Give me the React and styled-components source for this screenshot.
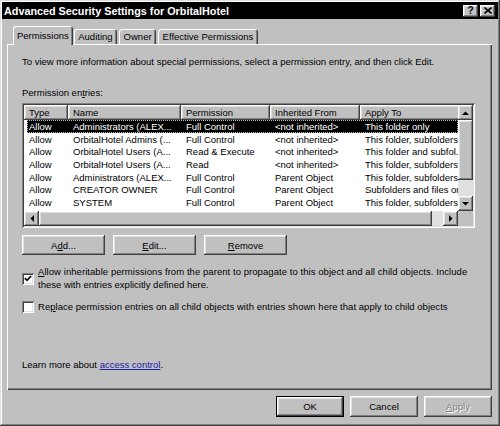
import React from 'react';
import styled, { createGlobalStyle } from 'styled-components';

const GlobalStyle = createGlobalStyle`
  html, body {
    margin: 0;
    padding: 0;
    background: #c0c0c0;
  }
  body {
    font-family: 'Liberation Sans', Arial, sans-serif;
    font-size: 9.5px;
    color: #000;
  }
  * {
    box-sizing: border-box;
  }
`;

const raised = `
  box-shadow: inset -1px -1px #404040, inset 1px 1px #fff,
    inset -2px -2px #808080, inset 2px 2px #dfdfdf;
`;

const sunken = `
  box-shadow: inset 1px 1px #808080, inset -1px -1px #fff,
    inset 2px 2px #404040, inset -2px -2px #dfdfdf;
`;

const COLUMNS = [
  { key: 'type', label: 'Type', w: 44 },
  { key: 'name', label: 'Name', w: 113 },
  { key: 'perm', label: 'Permission', w: 89 },
  { key: 'from', label: 'Inherited From', w: 90 },
  { key: 'apply', label: 'Apply To', w: 130 },
];

const ENTRIES = [
  ['Allow', 'Administrators (ALEX...', 'Full Control', '<not inherited>', 'This folder only'],
  ['Allow', 'OrbitalHotel Admins (...', 'Full Control', '<not inherited>', 'This folder, subfolders and files'],
  ['Allow', 'OrbitalHotel Users (A...', 'Read & Execute', '<not inherited>', 'This folder and subfol...'],
  ['Allow', 'OrbitalHotel Users (A...', 'Read', '<not inherited>', 'This folder, subfolders and files'],
  ['Allow', 'Administrators (ALEX...', 'Full Control', 'Parent Object', 'This folder, subfolders and files'],
  ['Allow', 'CREATOR OWNER', 'Full Control', 'Parent Object', 'Subfolders and files only'],
  ['Allow', 'SYSTEM', 'Full Control', 'Parent Object', 'This folder, subfolders and files'],
  ['Allow', 'Users (ALEXANDRIA\\...', 'Special', 'Parent Object', 'This folder and subfol...'],
];

const Window = styled.div`
  width: 500px;
  height: 426px;
  padding: 2px;
  background: #c0c0c0;
  display: flex;
  flex-direction: column;
  box-shadow: inset -1px -1px #404040, inset 1px 1px #dfdfdf,
    inset -2px -2px #808080, inset 2px 2px #fff;
`;

const TitleBar = styled.div`
  height: 17px;
  flex: none;
  background: #000;
  color: #fff;
  display: flex;
  align-items: center;
  padding: 0 3px 0 2px;
  font-weight: bold;
  font-size: 10.8px;
`;

const Title = styled.span`
  flex: 1;
  white-space: nowrap;
`;

const CaptionButton = styled.div`
  width: 15px;
  height: 12px;
  margin-left: ${(p) => (p.$gap ? '2px' : '0')};
  background: #c0c0c0;
  color: #000;
  ${raised}
  display: flex;
  align-items: center;
  justify-content: center;
  font-size: 10px;
  font-weight: bold;
  line-height: 1;
`;

const Body = styled.div`
  flex: 1;
  display: flex;
  flex-direction: column;
  padding: 7px 6px 0 5px;
`;

const TabStrip = styled.div`
  display: flex;
  align-items: flex-end;
  height: 19px;
  padding-left: 6px;
  margin-bottom: -1px;
  position: relative;
  z-index: 1;
`;

const Tab = styled.div`
  height: ${(p) => (p.$active ? '19px' : '15px')};
  margin-bottom: ${(p) => (p.$active ? '0' : '1px')};
  margin-right: ${(p) => (p.$active ? '1px' : '2px')};
  padding: 0 ${(p) => (p.$active ? '4px' : '4.5px')};
  background: #c0c0c0;
  border-radius: 3px 3px 0 0;
  box-shadow: inset 1px 1px #fff, inset -1px 0 #404040, inset -2px 0 #808080;
  display: flex;
  align-items: center;
  white-space: nowrap;
`;

const Panel = styled.div`
  height: 346px;
  flex: none;
  display: flex;
  flex-direction: column;
  padding: 12px 16px 0 15px;
  box-shadow: inset 1px 1px #fff, inset -1px -1px #404040,
    inset -2px -2px #808080;
`;

const Text = styled.div`
  line-height: 12px;
  white-space: nowrap;
  margin-top: ${(p) => p.$top || 0}px;
`;

const Link = styled.span`
  color: #1f1fa8;
  text-decoration: underline;
`;

const ListBox = styled.div`
  width: 453px;
  height: 125px;
  margin-top: 4px;
  padding: 2px;
  background: #fff;
  ${sunken}
  display: grid;
  grid-template-columns: 1fr 15px;
  grid-template-rows: 1fr 15px;
`;

const ListView = styled.div`
  min-width: 0;
  overflow: hidden;
  display: flex;
  flex-direction: column;
`;

const Header = styled.div`
  display: flex;
  height: 15px;
  flex: none;
`;

const HeaderCell = styled.div`
  width: ${(p) => p.$w}px;
  flex: none;
  padding-left: 5px;
  background: #c0c0c0;
  ${raised}
  display: flex;
  align-items: center;
  white-space: nowrap;
  overflow: hidden;
`;

const Row = styled.div`
  display: flex;
  align-items: center;
  height: 12.7px;
  flex: none;
  margin-left: 3px;
  background: ${(p) => (p.$selected ? '#000' : 'transparent')};
  color: ${(p) => (p.$selected ? '#fff' : '#000')};
  outline: ${(p) => (p.$selected ? '1px dotted #bbb' : 'none')};
  outline-offset: -1px;
`;

const Cell = styled.div`
  width: ${(p) => p.$w}px;
  flex: none;
  padding-left: ${(p) => p.$pad}px;
  white-space: nowrap;
  overflow: hidden;
`;

const ScrollBar = styled.div`
  display: flex;
  flex-direction: ${(p) => (p.$vertical ? 'column' : 'row')};
  background: #e0e0e0;
`;

const ArrowButton = styled.div`
  width: 15px;
  height: 15px;
  flex: none;
  background: #c0c0c0;
  ${raised}
  display: flex;
  align-items: center;
  justify-content: center;
`;

const Thumb = styled.div`
  flex: none;
  width: ${(p) => p.$w};
  height: ${(p) => p.$h};
  background: #c0c0c0;
  ${raised}
`;

const Track = styled.div`
  flex: 1;
`;

const Corner = styled.div`
  background: #c0c0c0;
`;

const ButtonRow = styled.div`
  display: flex;
  gap: ${(p) => p.$gap}px;
  margin-top: ${(p) => p.$top}px;
  justify-content: ${(p) => (p.$end ? 'flex-end' : 'flex-start')};
`;

const Button = styled.div`
  width: ${(p) => p.$w}px;
  height: ${(p) => p.$h}px;
  background: #c0c0c0;
  color: ${(p) => (p.$disabled ? '#808080' : '#000')};
  text-shadow: ${(p) => (p.$disabled ? '1px 1px #fff' : 'none')};
  display: flex;
  align-items: center;
  justify-content: center;
  ${raised}
  ${(p) =>
    p.$default &&
    `box-shadow: inset 0 0 0 1px #000, inset -2px -2px #404040, inset 2px 2px #fff,
      inset -3px -3px #808080, inset 3px 3px #dfdfdf;`}
`;

const CheckRow = styled.div`
  display: flex;
  align-items: center;
  gap: 4px;
  margin-top: ${(p) => p.$top}px;
`;

const CheckBox = styled.div`
  width: 12px;
  height: 12px;
  flex: none;
  background: #fff;
  ${sunken}
  display: flex;
  align-items: center;
  justify-content: center;
`;

const CheckLabel = styled.div`
  line-height: 12.6px;
  white-space: nowrap;
`;

const Wide = styled.span`
  letter-spacing: ${(p) => p.$spacing}px;
`;

const Arrow = ({ dir }) => {
  const pts = {
    up: '0,4 3.5,0.5 7,4',
    down: '0,0 3.5,3.5 7,0',
    left: '4,0 0.5,3.5 4,7',
    right: '0,0 3.5,3.5 0,7',
  }[dir];
  const vert = dir === 'up' || dir === 'down';
  return (
    <svg width={vert ? 7 : 4} height={vert ? 4 : 7} viewBox={vert ? '0 0 7 4' : '0 0 4 7'}>
      <polygon points={pts} fill="#000" />
    </svg>
  );
};

const CheckMark = () => (
  <svg width="8" height="7" viewBox="0 0 8 7">
    <polyline points="0.8,3.2 3,5.4 7.2,1" fill="none" stroke="#000" strokeWidth="1.7" />
  </svg>
);

const CloseGlyph = () => (
  <svg width="8" height="7" viewBox="0 0 8 7">
    <path d="M0.5 0.5 L7.5 6.5 M7.5 0.5 L0.5 6.5" stroke="#000" strokeWidth="1.6" />
  </svg>
);

const App = () => {
  const tabs = ['Permissions', 'Auditing', 'Owner', 'Effective Permissions'];

  return (
    <>
      <GlobalStyle />
      <Window>
        <TitleBar>
          <Title>Advanced Security Settings for OrbitalHotel</Title>
          <CaptionButton>?</CaptionButton>
          <CaptionButton $gap>
            <CloseGlyph />
          </CaptionButton>
        </TitleBar>
        <Body>
          <TabStrip>
            {tabs.map((t, i) => (
              <Tab key={t} $active={i === 0}>
                {t}
              </Tab>
            ))}
          </TabStrip>
          <Panel>
            <Text>
              To view more information about special permissions, select a permission entry, and
              then click Edit.
            </Text>
            <Text $top={19}>
              Permission en<u>t</u>ries:
            </Text>
            <ListBox>
              <ListView>
                <Header>
                  {COLUMNS.map((c) => (
                    <HeaderCell key={c.key} $w={c.w}>
                      {c.label}
                    </HeaderCell>
                  ))}
                </Header>
                {ENTRIES.map((row, r) => (
                  <Row key={r} $selected={r === 0}>
                    {row.map((v, i) => (
                      <Cell key={i} $w={i === 0 ? COLUMNS[0].w - 3 : COLUMNS[i].w} $pad={i === 0 ? 2 : 5}>
                        {v}
                      </Cell>
                    ))}
                  </Row>
                ))}
              </ListView>
              <ScrollBar $vertical>
                <ArrowButton>
                  <Arrow dir="up" />
                </ArrowButton>
                <Thumb $w="15px" $h="60px" />
                <Track />
                <ArrowButton>
                  <Arrow dir="down" />
                </ArrowButton>
              </ScrollBar>
              <ScrollBar>
                <ArrowButton>
                  <Arrow dir="left" />
                </ArrowButton>
                <Thumb $w="393px" $h="15px" />
                <Track />
                <ArrowButton>
                  <Arrow dir="right" />
                </ArrowButton>
              </ScrollBar>
              <Corner />
            </ListBox>
            <ButtonRow $gap={8} $top={7}>
              <Button $w={83} $h={20}>
                A<u>d</u>d...
              </Button>
              <Button $w={83} $h={20}>
                <u>E</u>dit...
              </Button>
              <Button $w={83} $h={20}>
                <u>R</u>emove
              </Button>
            </ButtonRow>
            <CheckRow $top={11}>
              <CheckBox>
                <CheckMark />
              </CheckBox>
              <CheckLabel>
                <Wide $spacing={0.06}>
                  <u>A</u>llow inheritable permissions from the parent to propagate to this object
                  and all child objects. Include
                </Wide>
                <br />
                these with entries explicitly defined here.
              </CheckLabel>
            </CheckRow>
            <CheckRow $top={10}>
              <CheckBox />
              <CheckLabel>
                <Wide $spacing={0.03}>
                  Re<u>p</u>lace permission entries on all child objects with entries shown here
                  that apply to child objects
                </Wide>
              </CheckLabel>
            </CheckRow>
            <Text $top={45}>
              Learn more about <Link>access control</Link>.
            </Text>
          </Panel>
          <ButtonRow $gap={6} $top={6} $end>
            <Button $w={68} $h={21} $default>
              OK
            </Button>
            <Button $w={68} $h={21}>
              Cancel
            </Button>
            <Button $w={68} $h={21} $disabled>
              <u>A</u>pply
            </Button>
          </ButtonRow>
        </Body>
      </Window>
    </>
  );
};

export default App;
